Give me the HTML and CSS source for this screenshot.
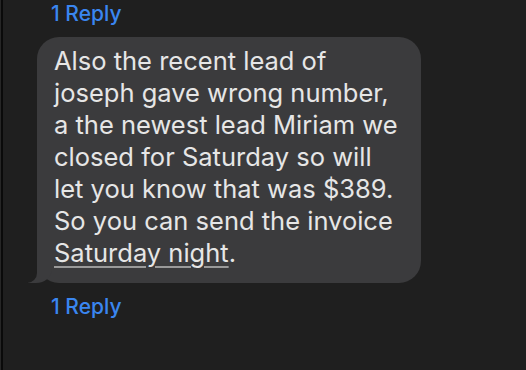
FILE: index.html
```html
<!DOCTYPE html>
<html lang="en">
<head>
    <meta charset="UTF-8">
    <title>Thread</title>
    <link rel="stylesheet" href="styles.css">
</head>
<body>

<div class="rail"></div>

<div class="thread">
    <a class="reply-link" href="#">1 Reply</a>

    <div class="message">
        <div class="bubble">
            Also the recent lead of<br>
            joseph gave wrong number,<br>
            a the newest lead Miriam we<br>
            closed for Saturday so will<br>
            let you know that was $389.<br>
            So you can send the invoice<br>
            <span class="date-link">Saturday night</span>.
        </div>
    </div>

    <a class="reply-link" href="#">1 Reply</a>
</div>

</body>
</html>
```

FILE: styles.css
```css
/* page */
body {
    margin: 0;
    height: 100vh;
    display: flex;
    background-color: #1f1f1f;
    font-family: Inter, "Liberation Sans", sans-serif;
    overflow: hidden;
}

/* left window edge */
.rail {
    width: 1px;
    border-right: 2px solid #0a0a0a;
    background-color: #262626;
}

.thread {
    display: flex;
    flex-direction: column;
    padding-left: 34px;
}

/* reply counter */
.reply-link {
    color: #3a86f0;
    font-size: 21px;
    font-weight: 500;
    text-decoration: none;
    margin-left: 14px;
    line-height: 28px;
}

.message {
    padding: 9px 0 10px;
}

/* message bubble with tail */
.bubble {
    position: relative;
    width: 349px;
    padding: 8px 18px 14px 17px;
    background-color: #3b3b3d;
    border-radius: 22px;
    color: #e6e6e6;
    font-size: 25.5px;
    line-height: 32px;
}

.bubble::before {
    content: "";
    position: absolute;
    left: -9px;
    bottom: 0;
    width: 24px;
    height: 24px;
    background-color: #3b3b3d;
    border-bottom-right-radius: 16px 14px;
}

.bubble::after {
    content: "";
    position: absolute;
    left: -12px;
    bottom: 0;
    width: 12px;
    height: 26px;
    background-color: #1f1f1f;
    border-bottom-right-radius: 10px;
}

.date-link {
    text-decoration: underline;
    text-decoration-color: #9a9a9a;
    text-underline-offset: 4px;
}
```
